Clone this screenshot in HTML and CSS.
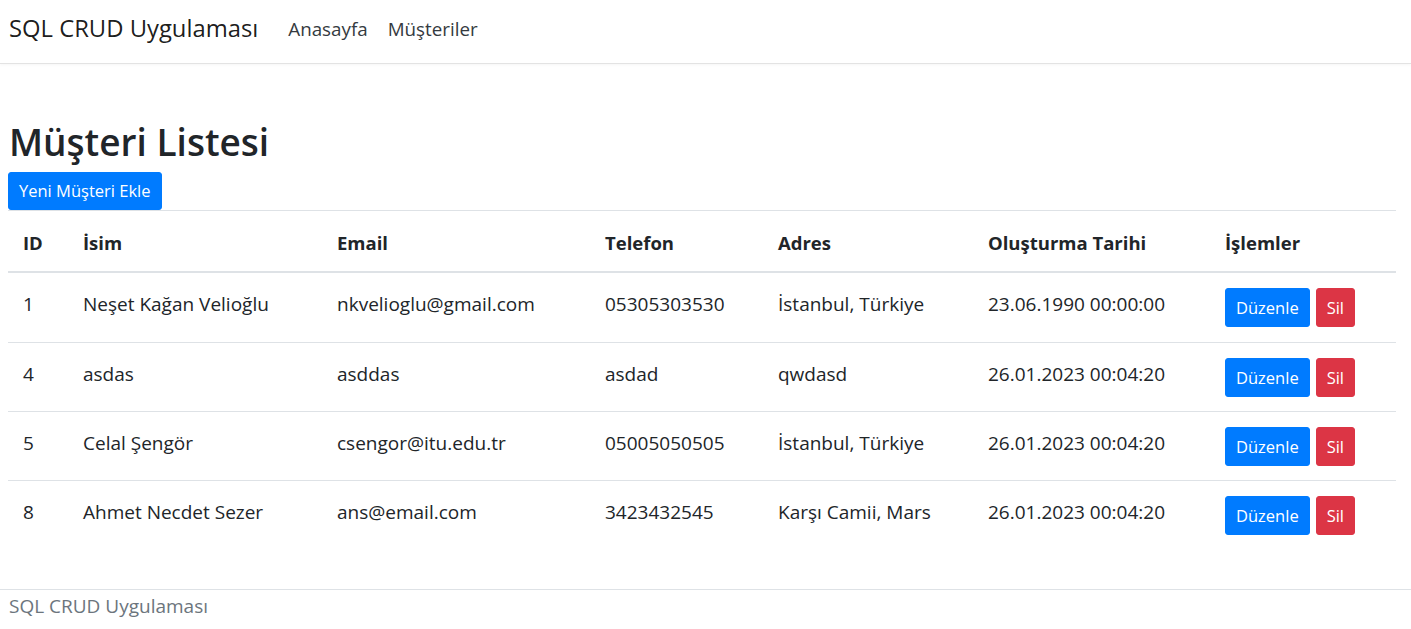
FILE: index.html
```html
<!DOCTYPE html>
<html lang="tr">
<head>
<meta charset="utf-8">
<title>Müşteri Listesi - SQL CRUD Uygulaması</title>
<link rel="stylesheet" href="styles.css">
</head>
<body>
<header class="navbar">
  <a class="brand" href="#">SQL CRUD Uygulaması</a>
  <nav class="nav">
    <a class="nav-link" href="#">Anasayfa</a>
    <a class="nav-link" href="#">Müşteriler</a>
  </nav>
</header>

<main class="content">
  <h1 class="title">Müşteri Listesi</h1>
  <div class="actions">
    <a class="btn btn-primary btn-add" href="#">Yeni Müşteri Ekle</a>
  </div>
  <table class="table">
    <colgroup>
      <col class="c-id"><col class="c-name"><col class="c-email"><col class="c-phone"><col class="c-addr"><col class="c-date"><col class="c-ops">
    </colgroup>
    <thead>
      <tr><th>ID</th><th>İsim</th><th>Email</th><th>Telefon</th><th>Adres</th><th>Oluşturma Tarihi</th><th>İşlemler</th></tr>
    </thead>
    <tbody>
      <tr><td>1</td><td>Neşet Kağan Velioğlu</td><td>nkvelioglu@gmail.com</td><td>05305303530</td><td>İstanbul, Türkiye</td><td>23.06.1990 00:00:00</td>
        <td class="ops"><a class="btn btn-primary" href="#">Düzenle</a><a class="btn btn-danger" href="#">Sil</a></td></tr>
      <tr><td>4</td><td>asdas</td><td>asddas</td><td>asdad</td><td>qwdasd</td><td>26.01.2023 00:04:20</td>
        <td class="ops"><a class="btn btn-primary" href="#">Düzenle</a><a class="btn btn-danger" href="#">Sil</a></td></tr>
      <tr><td>5</td><td>Celal Şengör</td><td>csengor@itu.edu.tr</td><td>05005050505</td><td>İstanbul, Türkiye</td><td>26.01.2023 00:04:20</td>
        <td class="ops"><a class="btn btn-primary" href="#">Düzenle</a><a class="btn btn-danger" href="#">Sil</a></td></tr>
      <tr><td>8</td><td>Ahmet Necdet Sezer</td><td>ans@email.com</td><td>3423432545</td><td>Karşı Camii, Mars</td><td>26.01.2023 00:04:20</td>
        <td class="ops"><a class="btn btn-primary" href="#">Düzenle</a><a class="btn btn-danger" href="#">Sil</a></td></tr>
    </tbody>
  </table>
</main>

<footer class="footer">SQL CRUD Uygulaması</footer>
</body>
</html>
```

FILE: styles.css
```css
* { box-sizing: border-box; }
html, body { margin: 0; padding: 0; }
body {
  font-family: "Open Sans", "Noto Sans", sans-serif;
  font-size: 19px;
  line-height: 1.5;
  color: #212529;
  background: #fff;
}
a { text-decoration: none; }

.navbar {
  display: flex;
  align-items: center;
  height: 64px;
  padding: 0 9px 5px;
  border-bottom: 1px solid #e3e3e3;
  box-shadow: 0 1px 3px rgba(0,0,0,.04);
}
.brand {
  font-size: 23.8px;
  color: rgba(0,0,0,.9);
  margin-right: 20px;
  white-space: nowrap;
}
.nav { display: flex; }
.nav-link {
  font-size: 18.8px;
  color: #343a40;
  padding: 0 10px;
}

.content { padding: 0 15px 0 8px; }
.title {
  font-size: 37px;
  font-weight: 600;
  line-height: 1.2;
  margin: 56px 0 8px 1px;
}
.actions { display: flex; }

.btn {
  display: inline-block;
  font-size: 16.5px;
  line-height: 27px;
  padding: 5px 10px;
  border: 1px solid transparent;
  border-radius: 3px;
  color: #fff;
  white-space: nowrap;
}
.btn-primary { background: #007bff; border-color: #007bff; }
.btn-danger { background: #dc3545; border-color: #dc3545; }
.btn-add { line-height: 26px; }

.table {
  width: 100%;
  table-layout: fixed;
  border-collapse: collapse;
}
.c-id { width: 60px; }
.c-name { width: 254px; }
.c-email { width: 268px; }
.c-phone { width: 173px; }
.c-addr { width: 210px; }
.c-date { width: 237px; }
.c-ops { width: 186px; }

.table th, .table td {
  text-align: left;
  vertical-align: top;
  padding: 17px 15px 13px;
  line-height: 30px;
  border-top: 1px solid #dee2e6;
  white-space: nowrap;
}
.table th { font-weight: 700; font-size: 18.5px; }
.table thead th { border-bottom: 2px solid #dee2e6; }
.table td { padding-top: 16px; padding-bottom: 21px; }
.table td.ops { padding-top: 15px; padding-bottom: 14px; line-height: 27px; }
.table tbody tr:first-child td.ops { padding-bottom: 15px; }
.ops .btn + .btn { margin-left: 6px; }

.footer {
  margin-top: 40px;
  border-top: 1px solid #dee2e6;
  padding: 1px 9px 4px;
  color: #6c757d;
  font-size: 19px;
  line-height: 30px;
}
```
